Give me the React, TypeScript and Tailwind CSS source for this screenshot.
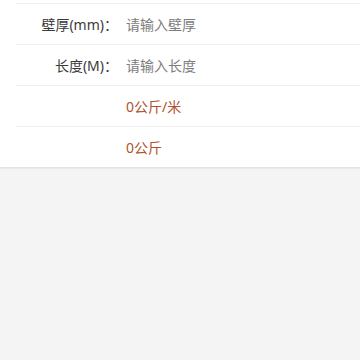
const rows = [
  { label: '壁厚(mm)：', value: '请输入壁厚', kind: 'input' },
  { label: '长度(M)：', value: '请输入长度', kind: 'input' },
  { label: '', value: '0公斤/米', kind: 'result' },
  { label: '', value: '0公斤', kind: 'result' },
];

export default function App() {
  return (
    <div
      className="min-h-[360px] bg-[#f4f4f4]"
      style={{ fontFamily: '"Noto Sans", "Noto Sans CJK SC", sans-serif' }}
    >
      <div className="bg-white pt-[3px] border-b border-[#e3e3e3] shadow-[0_1px_1px_rgba(0,0,0,0.04)]">
        {rows.map((r, i) => (
          <div
            key={i}
            className="ml-4 flex h-[41px] items-center border-t border-[#efefef] text-[14px]"
          >
            <div className="w-[102px] shrink-0 text-right text-[#3a3a3a]">{r.label}</div>
            <input
              readOnly
              placeholder={r.kind === 'input' ? r.value : undefined}
              value={r.kind === 'result' ? r.value : ''}
              className={
                'ml-2 flex-1 bg-transparent outline-none placeholder:text-[#7d7d7d] ' +
                (r.kind === 'result' ? 'text-[#b0532c]' : 'text-[#333333]')
              }
            />
          </div>
        ))}
      </div>
    </div>
  );
}
